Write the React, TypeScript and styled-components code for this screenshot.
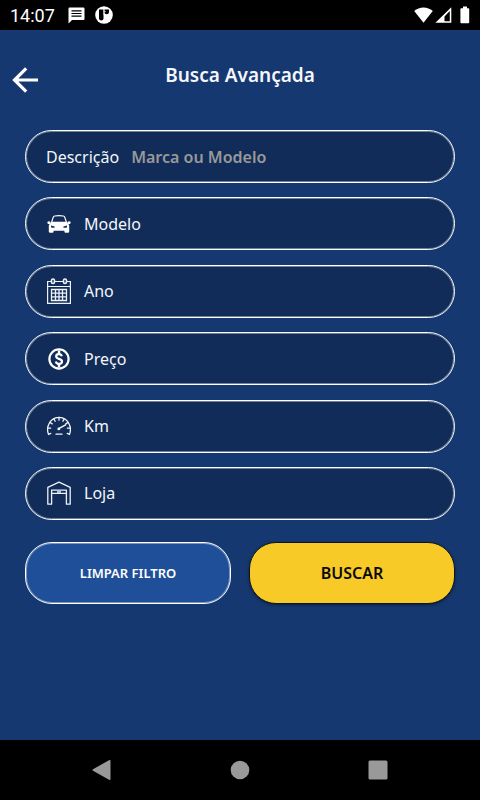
import React from "react";
import styled, { createGlobalStyle } from "styled-components";

const GlobalStyle = createGlobalStyle`
  *, *::before, *::after { box-sizing: border-box; }
  body { margin: 0; background: #163870; }
  button, input { font: inherit; }
`;

const Screen = styled.div`
  display: flex;
  flex-direction: column;
  min-height: 100vh;
  background: #163870;
  color: #f4f6fa;
  font-family: "Noto Sans", "Open Sans", sans-serif;
  font-size: 16px;
  line-height: 24px;
`;

const StatusBar = styled.div`
  display: flex;
  align-items: center;
  justify-content: space-between;
  height: 30px;
  padding: 0 10px;
  background: #000;
  color: #fff;
`;

const StatusGroup = styled.div<{ $gap: number }>`
  display: flex;
  align-items: center;
  gap: ${(p) => p.$gap}px;
`;

const Clock = styled.time`
  margin-right: 3px;
  padding-top: 2px;
  font-family: Roboto, sans-serif;
  font-size: 18px;
`;

const Icon = styled.svg`
  display: block;
  flex: none;
`;

const Header = styled.header`
  display: grid;
  grid-template-columns: 1fr auto 1fr;
  align-items: center;
  padding: 33px 12px;
`;

const BackButton = styled.button`
  justify-self: start;
  padding: 0;
  border: 0;
  background: none;
  color: #fff;
  cursor: pointer;
`;

const Title = styled.h1`
  margin: 0;
  padding-bottom: 10px;
  font-size: 19px;
  font-weight: 600;
  line-height: 24px;
`;

const SearchForm = styled.form`
  display: flex;
  flex: 1;
  flex-direction: column;
  gap: 22px;
  padding: 0 25px 24px;
`;

const FieldList = styled.div`
  display: grid;
  grid-template-rows: repeat(6, 53px);
  align-content: space-between;
  min-height: 390px;
`;

const outline = `
  border: 1px solid #fff;
  box-shadow: inset 0 0 0 1px rgba(255, 255, 255, 0.4);
`;

const fieldFrame = `
  ${outline}
  display: flex;
  align-items: center;
  width: 100%;
  border-radius: 27px;
  background: #112c58;
  color: inherit;
  text-align: left;
`;

const TextField = styled.label`
  ${fieldFrame}
  gap: 12px;
  padding: 0 20px;
`;

const TextInput = styled.input`
  flex: 1;
  min-width: 0;
  padding: 0;
  border: 0;
  outline: 0;
  background: none;
  color: #fff;
  font-weight: 600;

  &::placeholder {
    color: #999;
    opacity: 1;
  }
`;

const PickerField = styled.button`
  ${fieldFrame}
  gap: 13px;
  padding: 0 21px;
  cursor: pointer;
`;

const Actions = styled.div`
  display: grid;
  grid-template-columns: 1fr 1fr;
  gap: 18px;
`;

const ActionButton = styled.button`
  ${outline}
  height: 62px;
  padding: 0;
  border-radius: 27px;
  background: #1e4f98;
  color: #fff;
  font-size: 13px;
  font-weight: 600;
  cursor: pointer;
`;

const PrimaryButton = styled(ActionButton)`
  border-color: #0c1420;
  background: #f7ca27;
  box-shadow: 0 1px 3px #0a1d3e;
  color: #0a0a0a;
  font-size: 16px;
`;

const NavBar = styled.nav`
  display: grid;
  grid-template-columns: repeat(3, 1fr);
  align-items: center;
  justify-items: center;
  height: 60px;
  padding: 0 33px;
  background: #000;
`;

const NavButton = styled.button`
  padding: 0;
  border: 0;
  background: none;
  color: #999;
  cursor: pointer;
`;

const CarIcon = () => (
  <Icon width="24" height="24" viewBox="0 0 24 24" fill="none" aria-hidden="true">
    <path d="M4.500 10.500 6.200 5.400Q6.600 4.200 7.700 4Q12 3.400 16.300 4Q17.400 4.200 17.800 5.400L19.500 10.500" stroke="#fff" strokeWidth="1.200" />
    <path
      fillRule="evenodd"
      fill="#fff"
      d="M4.600 9.800h14.800l2 2.200q.8.9.8 2v5.400q0 1.400-1.400 1.400h-2.200q-1.200 0-1.200-1.200v-.8H6.600v.8q0 1.200-1.200 1.200H3.200q-1.400 0-1.400-1.400V14q0-1.100.8-2ZM4 13.400v1.800l1 .5h2.600v-1.100ZM20 13.400l-3.600 1.200v1.100H19l1-.5Z"
    />
    <path d="M.3 10q1.600-1.800 3.400.2l-.4 1.800H.8ZM23.700 10q-1.600-1.800-3.400.2l.4 1.800h2.500Z" fill="#fff" />
  </Icon>
);

const CalendarIcon = () => (
  <Icon width="24" height="26" viewBox="0 0 24 26" fill="none" stroke="#eef1f7" strokeWidth="1.200" aria-hidden="true">
    <path d="M4 3.500H.6v21.900h22.800V3.500H20M8 3.500h8M.6 8.500h22.800" />
    <rect x="4.500" y="1" width="3" height="4.500" rx="1.500" fill="#112c58" strokeWidth="1.600" />
    <rect x="16.500" y="1" width="3" height="4.500" rx="1.500" fill="#112c58" strokeWidth="1.600" />
    <path strokeWidth="1.300" d="M4.500 11.500h15v11h-15ZM8.500 11.500v11M12 11.500v11M15.500 11.500v11M4.500 15.200h15M4.500 18.800h15" />
  </Icon>
);

const PriceIcon = () => (
  <Icon width="24" height="24" viewBox="0 0 24 24" fill="none" stroke="#fff" aria-hidden="true">
    <circle cx="12" cy="12" r="9.600" strokeWidth="2.200" />
    <path strokeWidth="2.200" d="M14.800 9.300C14.400 7.800 13.400 7.200 12 7.200c-1.700 0-2.800.9-2.800 2.200 0 3.100 5.800 1.900 5.800 5.200 0 1.400-1.200 2.300-3 2.300-1.700 0-2.800-.8-3.100-2.400" />
    <path strokeWidth="2.400" d="M12 3.500v4M12 16.500v4" />
  </Icon>
);

const GaugeIcon = () => (
  <Icon width="24" height="24" viewBox="0 0 24 24" fill="none" stroke="#f4f6fa" strokeWidth="1.300" strokeLinecap="round" aria-hidden="true">
    <path d="M3.800 19.400 1.500 20.300C.3 17.200.3 13.400 1.700 10.400 3.500 6 7.400 3.300 12 3.300s8.500 2.700 10.300 7.100c1.400 3 1.400 6.800.2 9.900l-2.300-.9" />
    <path d="M12 3.500v2.700M6.900 4.900l1.200 2.300M17.100 4.900l-1.200 2.300M3.100 8.500l2.100 1.400M20.900 8.500l-2.100 1.400M.9 14.200h2.700M20.400 14.200h2.700M9 20.200h6" />
    <path d="m12.600 14.200 6-3.300" strokeWidth="1.500" />
    <circle cx="11.800" cy="14.900" r=".8" />
  </Icon>
);

const StoreIcon = () => (
  <Icon width="24" height="24" viewBox="0 0 24 24" fill="none" stroke="#eef1f7" strokeWidth="1.300" strokeLinejoin="round" aria-hidden="true">
    <path d="M.8 23.200V6.400L12 1.200l11.200 5.200v16.800h-3.800V9.200H4.600v14Z" />
    <path d="M4.600 12.400h14.800M10 10.900h4" />
  </Icon>
);

const pickers = [
  { label: "Modelo", Glyph: CarIcon },
  { label: "Ano", Glyph: CalendarIcon },
  { label: "Preço", Glyph: PriceIcon },
  { label: "Km", Glyph: GaugeIcon },
  { label: "Loja", Glyph: StoreIcon },
];

export default function App() {
  return (
    <Screen>
      <GlobalStyle />
      <StatusBar>
        <StatusGroup $gap={10}>
          <Clock>14:07</Clock>
          <Icon width="17" height="17" viewBox="0 0 17 17" aria-hidden="true">
            <path fill="#fff" d="M1.500.5h14q1 0 1 1v10.600q0 1-1 1H4L.5 16.500V1.500q0-1 1-1Z" />
            <path stroke="#000" strokeWidth="1.200" d="M3.500 3.800h10M3.500 6.500h10M3.500 9.200h10" />
          </Icon>
          <Icon width="18" height="18" viewBox="0 0 18 18" aria-hidden="true">
            <circle cx="9" cy="9" r="8.800" fill="#fff" />
            <path fill="#000" d="M4 3.500h4.500v9q0 2-2.200 2T4 12.500Z" />
            <path fill="#000" d="M9.300 3.500H14v2.400q0 2.400-2.300 2.400T9.300 6.200Z" />
            <path stroke="#fff" strokeWidth=".8" d="M9 3v6M9.200 5.600h1.500" />
          </Icon>
        </StatusGroup>
        <StatusGroup $gap={2}>
          <Icon width="19" height="16" viewBox="0 0 19 16" aria-hidden="true">
            <path fill="#fff" d="M9.500 15.800.2 4Q4.200.4 9.500.4T18.800 4Z" />
          </Icon>
          <Icon width="17" height="16" viewBox="0 0 17 16" aria-hidden="true">
            <path fill="#fff" fillRule="evenodd" d="M16.300.2V15.800H.4ZM14.800 4v10.300H9.500V9.400Z" />
          </Icon>
          <Icon width="16" height="18" viewBox="0 0 16 18" aria-hidden="true">
            <path fill="#fff" d="M9 .5h4v1.700h1.400q.8 0 .8.800v13.500q0 .8-.8.800H7.200q-.8 0-.8-.8V3q0-.8.8-.8H9Z" />
          </Icon>
        </StatusGroup>
      </StatusBar>

      <Header>
        <BackButton type="button" aria-label="Voltar">
          <Icon width="26" height="26" viewBox="0 0 26 26" fill="none" stroke="currentColor" strokeWidth="3.200">
            <path d="M26 13H3M14.200 1.300 2.500 13l11.700 11.700" />
          </Icon>
        </BackButton>
        <Title>Busca Avançada</Title>
      </Header>

      <SearchForm onSubmit={(e) => e.preventDefault()}>
        <FieldList>
          <TextField>
            Descrição
            <TextInput type="text" name="descricao" placeholder="Marca ou Modelo" />
          </TextField>
          {pickers.map(({ label, Glyph }) => (
            <PickerField key={label} type="button" aria-haspopup="dialog">
              <Glyph />
              {label}
            </PickerField>
          ))}
        </FieldList>
        <Actions>
          <ActionButton type="reset">LIMPAR FILTRO</ActionButton>
          <PrimaryButton type="submit">BUSCAR</PrimaryButton>
        </Actions>
      </SearchForm>

      <NavBar>
        <NavButton type="button" aria-label="Voltar à tela anterior">
          <Icon width="20" height="22" viewBox="0 0 20 22" fill="currentColor">
            <path d="M1 10.200 17 1.200q1.500-.8 1.500.8v18q0 1.600-1.500.8l-16-9q-1-.8 0-1.600Z" />
          </Icon>
        </NavButton>
        <NavButton type="button" aria-label="Início">
          <Icon width="20" height="20" viewBox="0 0 20 20" fill="currentColor">
            <circle cx="10" cy="10" r="9.300" />
          </Icon>
        </NavButton>
        <NavButton type="button" aria-label="Recentes">
          <Icon width="20" height="20" viewBox="0 0 20 20" fill="currentColor">
            <rect x=".5" y=".5" width="19" height="19" rx="1.500" />
          </Icon>
        </NavButton>
      </NavBar>
    </Screen>
  );
}
